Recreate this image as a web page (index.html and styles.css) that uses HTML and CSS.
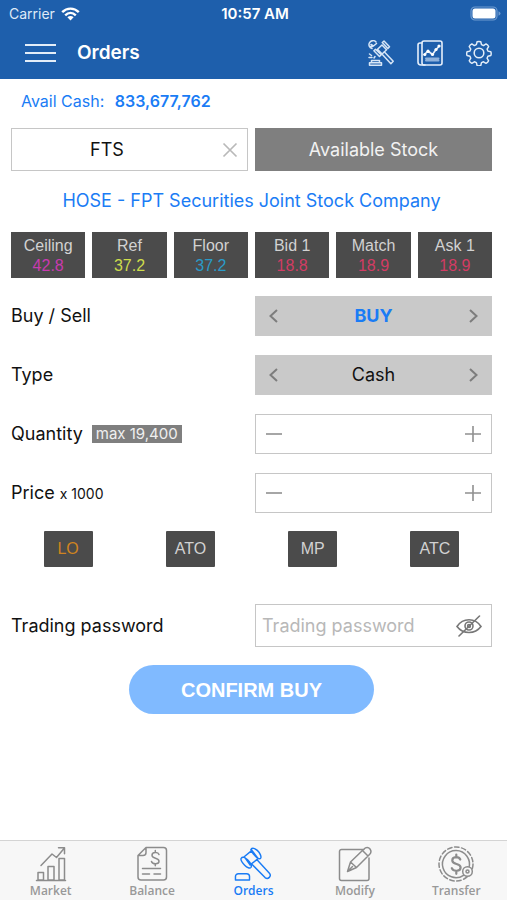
FILE: index.html
```html
<!DOCTYPE html>
<html lang="en">
<head>
<meta charset="utf-8">
<meta name="viewport" content="width=device-width, initial-scale=1">
<title>Orders</title>
<link rel="stylesheet" href="styles.css">
</head>
<body>
<header class="top">
  <div class="status">
    <span class="carrier">Carrier
      <svg width="19" height="14" viewBox="0 0 19 14" fill="none" stroke="#fff" stroke-width="2.4" aria-hidden="true"><path d="M1.2 5.2C6 .4 13 .4 17.8 5.2"/><path d="M4.2 8.3c3.2-3 7.400-3 10.600 0"/><path d="M9.500 13.400L6.400 10.300c1.800-1.600 4.400-1.600 6.200 0z" fill="#fff" stroke="none"/></svg>
    </span>
    <span class="clock">10:57 AM</span>
    <span class="battery"><svg width="31" height="15" viewBox="0 0 31 15" aria-hidden="true"><rect x="1" y="1" width="26" height="13" rx="4" fill="none" stroke="#6f9bd0" stroke-width="1.200"/><rect x="2.500" y="2.500" width="23" height="10" rx="2.500" fill="#fff"/><path d="M28.500 5.200q2 .8 2 2.300t-2 2.300z" fill="#6f9bd0"/></svg></span>
  </div>
  <div class="nav">
    <button class="icon-btn" type="button" aria-label="Menu"><svg width="32" height="20" viewBox="0 0 32 20" stroke="#e3edf8" stroke-width="2" aria-hidden="true"><path d="M0 2h31M0 10h31M0 18h31"/></svg></button>
    <h1>Orders</h1>
    <div class="actions">
      <button class="icon-btn" type="button" aria-label="Auction"><svg width="26" height="26" viewBox="0 0 26 26" fill="none" stroke="#d6e5f6" stroke-width="1.500" stroke-linejoin="round" stroke-linecap="round" aria-hidden="true"><path d="M9.500 9.300l4.500-4.300 4.600 4.700-4.500 4.300zM14.300 2.500l1.700-1.500 5.500 5.700-1.600 1.700zM7.500 9.200l-1.600 1.600 5.600 5.700 1.700-1.700zM16.200 11.800l9 9.500-2.300 2.400-9-9.700"/><path d="M3.500 20.500h8v2.300h-8zM1.500 25.200h12v-2.400h-12zM1.500 14l2 1.500M1 17.500h3M6 18l1-1.500M8 2a4 4 0 1 0-4 6.500M3 4.500l2.500 1.500L8.500 3.500M1.500 6.500h3"/></svg></button>
      <button class="icon-btn" type="button" aria-label="Charts"><svg width="26" height="26" viewBox="0 0 26 26" fill="none" stroke="#e6effa" stroke-width="1.600" stroke-linejoin="round" stroke-linecap="round" aria-hidden="true"><rect x="5" y="1" width="20" height="24" rx="2"/><path d="M5 3H3a2 2 0 0 0-2 2v17a3 3 0 0 0 3 3h4"/><path d="M7.500 14.500l3.500-3.500 4.500 3.500 3.500-5 3.500-3.500" stroke-width="1.700"/><g fill="#fff" stroke="none"><circle cx="7.800" cy="14.500" r="1.600"/><circle cx="11" cy="11.200" r="1.600"/><circle cx="15.500" cy="14.500" r="1.600"/><circle cx="19" cy="9.500" r="1.600"/><circle cx="22" cy="6" r="1.600"/></g><path d="M9 18.500h12.500M9 20.500h12.500" stroke="#8fb2dc" stroke-width="2"/></svg></button>
      <button class="icon-btn" type="button" aria-label="Settings"><svg width="26" height="26" viewBox="0 0 27 27" fill="none" stroke="#e3edf8" stroke-width="1.600" stroke-linejoin="round" aria-hidden="true"><circle cx="13.500" cy="13.500" r="5"/><path d="M11.500 1.500q2-.8 4 0l.8 3.200 2.200.9 2.800-1.700q2 .8 2.800 2.800l-1.700 2.800.9 2.200 3.200.8q.8 2 0 4l-3.200.8-.9 2.200 1.700 2.800q-.8 2-2.800 2.800l-2.800-1.700-2.200.9-.8 3.200q-2 .8-4 0l-.8-3.200-2.200-.9-2.800 1.700q-2-.8-2.800-2.800l1.700-2.800-.9-2.200-3.200-.8q-.8-2 0-4l3.200-.8.9-2.200-1.700-2.800q.8-2 2.800-2.800l2.800 1.700 2.200-.9z" transform="translate(.6 .4) scale(.95)"/></svg></button>
    </div>
  </div>
</header>

<main>
  <p class="cash">Avail Cash: <strong>833,677,762</strong></p>

  <div class="pair">
    <div class="symbol">
      <input type="text" value="FTS" aria-label="Stock symbol">
      <button class="icon-btn" type="button" aria-label="Clear"><svg width="16" height="16" viewBox="0 0 16 16" stroke="#b9b9b9" stroke-width="1.700" aria-hidden="true"><path d="M1.500 1.500l13 13M14.500 1.500l-13 13"/></svg></button>
    </div>
    <button class="stock" type="button">Available Stock</button>
  </div>

  <p class="company">HOSE - FPT Securities Joint Stock Company</p>

  <div class="quotes">
    <button type="button"><span>Ceiling</span><span class="ceiling">42.8</span></button>
    <button type="button"><span>Ref</span><span class="ref">37.2</span></button>
    <button type="button"><span>Floor</span><span class="floor">37.2</span></button>
    <button type="button"><span>Bid 1</span><span class="down">18.8</span></button>
    <button type="button"><span>Match</span><span class="down">18.9</span></button>
    <button type="button"><span>Ask 1</span><span class="down">18.9</span></button>
  </div>

  <div class="form">
    <div class="pair">
      <span class="label" id="side-label">Buy / Sell</span>
      <div class="picker" role="group" aria-labelledby="side-label">
        <button class="icon-btn" type="button" aria-label="Previous side"><svg class="step" viewBox="0 0 16 16" aria-hidden="true"><path d="M11 2L4.500 8l6.500 6"/></svg></button>
        <output class="buy">BUY</output>
        <button class="icon-btn" type="button" aria-label="Next side"><svg class="step" viewBox="0 0 16 16" aria-hidden="true"><path d="M5 2l6.500 6L5 14"/></svg></button>
      </div>
    </div>
    <div class="pair">
      <span class="label" id="type-label">Type</span>
      <div class="picker" role="group" aria-labelledby="type-label">
        <button class="icon-btn" type="button" aria-label="Previous type"><svg class="step" viewBox="0 0 16 16" aria-hidden="true"><path d="M11 2L4.500 8l6.500 6"/></svg></button>
        <output>Cash</output>
        <button class="icon-btn" type="button" aria-label="Next type"><svg class="step" viewBox="0 0 16 16" aria-hidden="true"><path d="M5 2l6.500 6L5 14"/></svg></button>
      </div>
    </div>
    <div class="pair">
      <label class="label" for="quantity">Quantity <span class="max">max 19,400</span></label>
      <div class="picker field">
        <button class="icon-btn" type="button" aria-label="Decrease quantity"><svg class="step thin" viewBox="0 0 16 16" aria-hidden="true"><path d="M0 8h16"/></svg></button>
        <input id="quantity" type="text" inputmode="numeric">
        <button class="icon-btn" type="button" aria-label="Increase quantity"><svg class="step thin" viewBox="0 0 16 16" aria-hidden="true"><path d="M0 8h16M8 0v16"/></svg></button>
      </div>
    </div>
    <div class="pair">
      <label class="label price" for="price">Price <small>x 1000</small></label>
      <div class="picker field">
        <button class="icon-btn" type="button" aria-label="Decrease price"><svg class="step thin" viewBox="0 0 16 16" aria-hidden="true"><path d="M0 8h16"/></svg></button>
        <input id="price" type="text" inputmode="decimal">
        <button class="icon-btn" type="button" aria-label="Increase price"><svg class="step thin" viewBox="0 0 16 16" aria-hidden="true"><path d="M0 8h16M8 0v16"/></svg></button>
      </div>
    </div>
  </div>

  <div class="kinds">
    <button class="on" type="button">LO</button>
    <button type="button">ATO</button>
    <button type="button">MP</button>
    <button type="button">ATC</button>
  </div>

  <div class="pair">
    <label class="label" for="password">Trading password</label>
    <div class="secret">
      <input id="password" type="password" placeholder="Trading password">
      <button class="icon-btn" type="button" aria-label="Show password"><svg width="26" height="22" viewBox="0 0 26 22" fill="none" stroke="#777" stroke-width="1.600" stroke-linecap="round" aria-hidden="true"><path d="M1 11.500C7 2.500 19 2.500 25 11.500 19 19.500 7 19.500 1 11.500z"/><circle cx="13" cy="11" r="4"/><circle cx="13" cy="11" r="1.400"/><path d="M3 21L23.500 1"/></svg></button>
    </div>
  </div>

  <button class="confirm" type="button">CONFIRM BUY</button>
</main>

<nav class="tabs">
  <a href="#market"><svg viewBox="0 0 36 36" aria-hidden="true"><path d="M5 26.500h5.500V34H5zM15 20.500h6V34h-6zM26 12.500h5.500V34H26zM3.500 34.500h29M8 19.500L19 8l4.500 3.500L31 2.500M25.500 1.700h6v6"/></svg>Market</a>
  <a href="#balance"><svg viewBox="0 0 36 36" aria-hidden="true"><path d="M12 1.500h17.500a3 3 0 0 1 3 3V31a3 3 0 0 1-3 3H7a3 3 0 0 1-3-3V9.500zM12 1.500V6.500a3 3 0 0 1-3 3H4M8.500 22.500h18M8.500 28h7M20 28h6.500M25 8.500c-1-3-7-2.500-7 .7 0 3.800 7 2.200 7 6 0 3.300-6.500 3.500-7.500.3M21.300 4.500v2M21.300 17.700v2.100"/></svg>Balance</a>
  <a class="current" href="#orders" aria-current="page"><svg viewBox="0 0 36 36" aria-hidden="true"><g transform="translate(-1 1) scale(.97)"><path d="M10.500 10l8-6.500 6.500 8.500-8.500 6.500zM17.500 2.500c1.200-1.800 3.800-1.500 6.500 1s4.500 6.500 3.500 8c-1 1.300-3.500.3-6-2.700s-4.800-4.800-4-6.300zM7.500 11.500c1.200-1.800 3.800-1 6.500 1.700s4.500 6.300 3.500 7.800c-1.200 1.500-4 .3-6.500-2.300s-4.700-5.500-3.500-7.200zM20.500 15.500l3-2.500L36.500 27c2.500 3-1.200 7-4.500 4.500L18.700 18M1.500 34v-3.500a3 3 0 0 1 3-3H13a3 3 0 0 1 3 3V34z"/></g></svg>Orders</a>
  <a href="#modify"><svg viewBox="0 0 36 36" aria-hidden="true"><path d="M27 3.500H4.500a2 2 0 0 0-2 2v27a2 2 0 0 0 2 2H30a2 2 0 0 0 2-2V12M10.500 25.500l3-9.500L27 3c2-2.200 4.500-2 6 0s1.500 3.500-.5 5.500l-13 13zM13.500 16l6 5.500M25.500 4.500l5.500 5.500M10.500 25.500l5-5"/></svg>Modify</a>
  <a href="#transfer"><svg viewBox="0 0 36 36" aria-hidden="true"><circle cx="18" cy="18" r="17" stroke-dasharray="4.500 2.600"/><path d="M25.500 29.300a13.500 13.500 0 1 1 5.300-7"/><path d="M22.300 13.500c-1.300-3.300-8-3.200-8 .9 0 4.600 8.300 2.500 8.300 7 0 4.200-7.300 4.400-8.800.8M18.300 8.500v3M18.300 24.800v3" stroke-width="2.200"/><circle cx="29.500" cy="25.500" r="4.800" fill="#f7f7f7"/><circle cx="29.500" cy="25.500" r="1.500"/></svg>Transfer</a>
</nav>
</body>
</html>
```

FILE: styles.css
```css
* { box-sizing: border-box; }

body {
  margin: 0;
  min-height: 100vh;
  display: flex;
  flex-direction: column;
  background: #fff;
  color: #111;
  font-family: Inter, "Liberation Sans", sans-serif;
  font-size: 18px;
  line-height: 24px;
}

button, input {
  font: inherit;
  color: inherit;
  border: 0;
  border-radius: 0;
  margin: 0;
  padding: 0;
  background: none;
}

h1, p { margin: 0; }
svg { display: block; }

.icon-btn {
  flex: none;
  display: flex;
  align-items: center;
  justify-content: center;
}

.top {
  background: #1e5fac;
  color: #fff;
}

.status {
  display: grid;
  grid-template-columns: 1fr auto 1fr;
  align-items: center;
  height: 27px;
  padding: 0 6px 0 9px;
  font-size: 14px;
}
.carrier { display: flex; align-items: center; gap: 6px; color: #dfeaf7; }
.clock { font-size: 15px; font-weight: 600; }
.battery { justify-self: end; }

.nav {
  display: flex;
  align-items: center;
  height: 52px;
  padding: 0 15px 0 25px;
}
.nav h1 { margin-left: 20px; font-size: 19px; font-weight: 600; }
.actions { display: flex; align-items: center; gap: 23px; margin-left: auto; }

main { flex: 1; padding: 10px 15px 0 11px; }

.cash { padding-left: 10px; font-size: 16px; color: #1a7cf5; }
.cash strong { margin-left: 6px; font-weight: 600; }

.pair {
  display: grid;
  grid-template-columns: repeat(2, minmax(0, 1fr));
  gap: 7px;
  align-items: center;
}
.cash + .pair { margin-top: 15px; }

.symbol, .secret {
  display: flex;
  align-items: center;
  height: 43px;
  border: 1px solid #c6c6c6;
  padding-right: 9px;
}
.symbol input, .secret input { flex: 1; min-width: 0; height: 100%; }
.symbol input { text-align: center; padding-right: 20px; }
.stock { height: 43px; background: #7f7f7f; color: #f2f2f2; }

.company { margin-top: 18px; text-align: center; color: #1a7cf5; }

.quotes {
  display: grid;
  grid-template-columns: repeat(6, minmax(0, 1fr));
  gap: 7px;
  margin-top: 19px;
}
.quotes button {
  display: flex;
  flex-direction: column;
  align-items: center;
  justify-content: center;
  height: 46px;
  padding-top: 2px;
  background: #4b4b4b;
  color: #d2d2d2;
  font-family: "Liberation Sans", sans-serif;
  font-size: 16px;
  line-height: 20px;
}
.quotes .ceiling { color: #c93ab0; }
.quotes .ref { color: #cddc4b; }
.quotes .floor { color: #2a9bc9; }
.quotes .down { color: #d23c64; }

.form { display: grid; gap: 19px; margin-top: 18px; }
.label { display: flex; align-items: center; gap: 9px; white-space: nowrap; }
.price { align-items: baseline; gap: 5px; }
.label small { font-size: 14px; }
.max {
  padding: 0 4px;
  background: #7f7f7f;
  color: #f0f0f0;
  font-size: 15px;
  line-height: 18px;
}

.picker {
  display: flex;
  align-items: center;
  height: 40px;
  padding: 0 11px;
  background: #c9c9c9;
}
.picker output, .picker input { flex: 1; min-width: 0; text-align: center; }
.picker .buy { color: #1a7cf5; font-weight: 700; }
.field { background: #fff; border: 1px solid #c6c6c6; padding: 0 10px; }

.step {
  width: 16px;
  height: 16px;
  fill: none;
  stroke: #7d7d7d;
  stroke-width: 2;
}
.thin { stroke: #909090; stroke-width: 1.6; }

.kinds {
  display: grid;
  grid-template-columns: repeat(4, 1fr);
  justify-items: center;
  margin: 18px -4px 37px;
}
.kinds button {
  width: 49px;
  height: 36px;
  border-radius: 1px;
  background: #4b4b4b;
  color: #d2d2d2;
  font-family: "Liberation Sans", sans-serif;
  font-size: 16px;
}
.kinds .on { color: #cf8420; }

.secret input { padding-left: 6px; }
.secret input::placeholder { color: #b8b8b8; opacity: 1; }

.confirm {
  display: block;
  width: 51%;
  height: 49px;
  margin: 18px auto;
  border-radius: 25px;
  background: #80baff;
  color: #fff;
  font-family: "Liberation Sans", sans-serif;
  font-size: 20px;
  font-weight: 700;
}

.tabs {
  display: grid;
  grid-template-columns: repeat(5, 1fr);
  height: 60px;
  padding-top: 5px;
  border-top: 1px solid #d4d4d4;
  background: #f7f7f7;
}
.tabs a {
  display: flex;
  flex-direction: column;
  align-items: center;
  color: #999;
  text-decoration: none;
  font-family: "Open Sans", sans-serif;
  font-size: 12px;
  font-weight: 600;
  line-height: 18px;
}
.tabs svg {
  width: 36px;
  height: 36px;
  overflow: visible;
  fill: none;
  stroke: #8c8c8c;
  stroke-width: 1.5;
  stroke-linejoin: round;
  stroke-linecap: round;
}
.tabs .current { color: #1a7cf5; }
.tabs .current svg { stroke: #1a7cf5; }
```
